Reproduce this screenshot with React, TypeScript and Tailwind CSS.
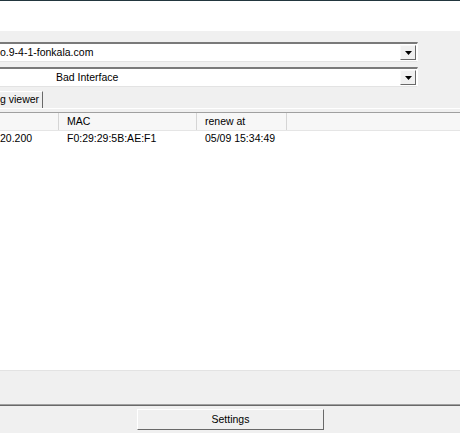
import React from "react";

const FONT = { fontFamily: '"Liberation Sans", Arial, sans-serif' };

function DropArrow() {
  return (
    <div className="flex h-full w-[16px] items-center justify-center border-t border-l border-t-[#f8f8f8] border-l-[#f8f8f8] border-r border-b border-r-[#696969] border-b-[#696969] bg-[#f0f0f0]">
      <svg width="7" height="4" viewBox="0 0 7 4">
        <path d="M0 0h7L3.5 4z" fill="#000" />
      </svg>
    </div>
  );
}

function Combo({ text, indent }: { text: string; indent: string }) {
  return (
    <div className="flex h-[20px] border-t-2 border-t-[#7a7a7a] border-b border-b-[#e3e3e3] border-r border-r-[#ffffff] bg-white">
      <div className={`flex flex-1 items-center ${indent}`}>{text}</div>
      <div className="py-px pr-px">
        <DropArrow />
      </div>
    </div>
  );
}

export default function App() {
  return (
    <div className="flex h-[433px] w-[460px] flex-col overflow-hidden bg-[#f0f0f0] text-[10.5px] text-black" style={FONT}>
      <div className="h-px bg-[#22363e]" />
      <div className="h-[30px] bg-white" />

      <div className="flex flex-col gap-[5px] pr-[42px] pt-[11px]">
        <Combo text="o.9-4-1-fonkala.com" indent="pl-0" />
        <Combo text="Bad Interface" indent="pl-[56px]" />
      </div>

      <div className="mt-[4px] flex h-[18px] border-b border-b-white">
        <div className="flex items-center border-t border-t-white border-r border-r-[#696969] pr-[3px]">g viewer</div>
      </div>

      <div className="mt-[3px] flex h-[258px] flex-col bg-white border-t border-t-[#a0a0a0]">
        <div className="flex h-[18px] border-b border-b-[#e5e5e5] bg-[#f7f7f7]">
          <div className="w-[59px] border-r border-r-[#d5d5d5]" />
          <div className="flex w-[138px] items-center border-r border-r-[#d5d5d5] pl-[8px]">MAC</div>
          <div className="flex w-[90px] items-center border-r border-r-[#d5d5d5] pl-[8px]">renew at</div>
          <div className="flex-1" />
        </div>
        <div className="flex h-[16px] items-center">
          <div className="w-[59px]">20.200</div>
          <div className="w-[138px] pl-[8px]">F0:29:29:5B:AE:F1</div>
          <div className="w-[90px] pl-[8px]">05/09 15:34:49</div>
        </div>
      </div>

      <div className="h-px bg-[#e3e3e3]" />
      <div className="h-[33px]" />
      <div className="h-px bg-[#a0a0a0]" />
      <div className="h-px bg-[#696969]" />

      <div className="flex pl-[137px] pt-[3px]">
        <button className="flex h-[21px] w-[187px] items-center justify-center border-t border-l border-t-white border-l-white border-r border-b border-r-[#696969] border-b-[#696969] bg-[#f0f0f0]">
          Settings
        </button>
      </div>
    </div>
  );
}
